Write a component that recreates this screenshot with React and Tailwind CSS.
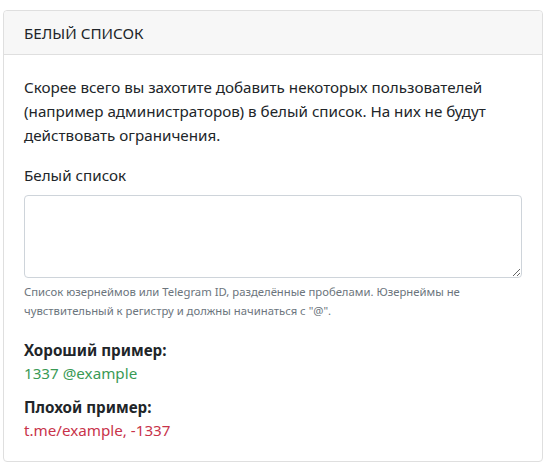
import React from 'react';

const App = () => (
    <div className="min-h-screen bg-white pt-[10px] pl-[3px] text-[#212529]" style={{ fontFamily: '"Noto Sans", "Open Sans", sans-serif' }}>
        <div className="w-[540px] rounded border border-[#dfdfdf] bg-white">
            <div className="h-[44px] flex items-center px-5 bg-[#f7f7f7] border-b border-[#dfdfdf] rounded-t">
                <h5 className="text-[15.2px] leading-6 uppercase">Белый список</h5>
            </div>
            <div className="p-5">
                <p className="text-[15.2px] leading-6 mb-4">
                    Скорее всего вы захотите добавить некоторых пользователей (например администраторов) в белый список. На них не будут действовать ограничения.
                </p>
                <div className="mb-4">
                    <label className="block text-[15.2px] leading-6 mb-2">Белый список</label>
                    <textarea className="block w-full h-[83px] rounded border border-[#ced4da] px-3 py-1.5 text-base outline-none"></textarea>
                    <small className="block mt-1 text-[11.3px] leading-[19px] text-[#6c757d]">
                        Список юзернеймов или Telegram ID, разделённые пробелами. Юзернеймы не чувствительный к регистру и должны начинаться с "@".
                    </small>
                </div>
                <div className="pt-0.5">
                    <div className="font-bold text-[15.2px] leading-6">Хороший пример:</div>
                    <div className="text-[15.2px] leading-[22px] text-[#3a9a55]">1337 @example</div>
                    <div className="font-bold text-[15.2px] leading-6 mt-[11px]">Плохой пример:</div>
                    <div className="text-[15.2px] leading-[22px] text-[#c8334a]">t.me/example, -1337</div>
                </div>
            </div>
        </div>
    </div>
);

export default App;
